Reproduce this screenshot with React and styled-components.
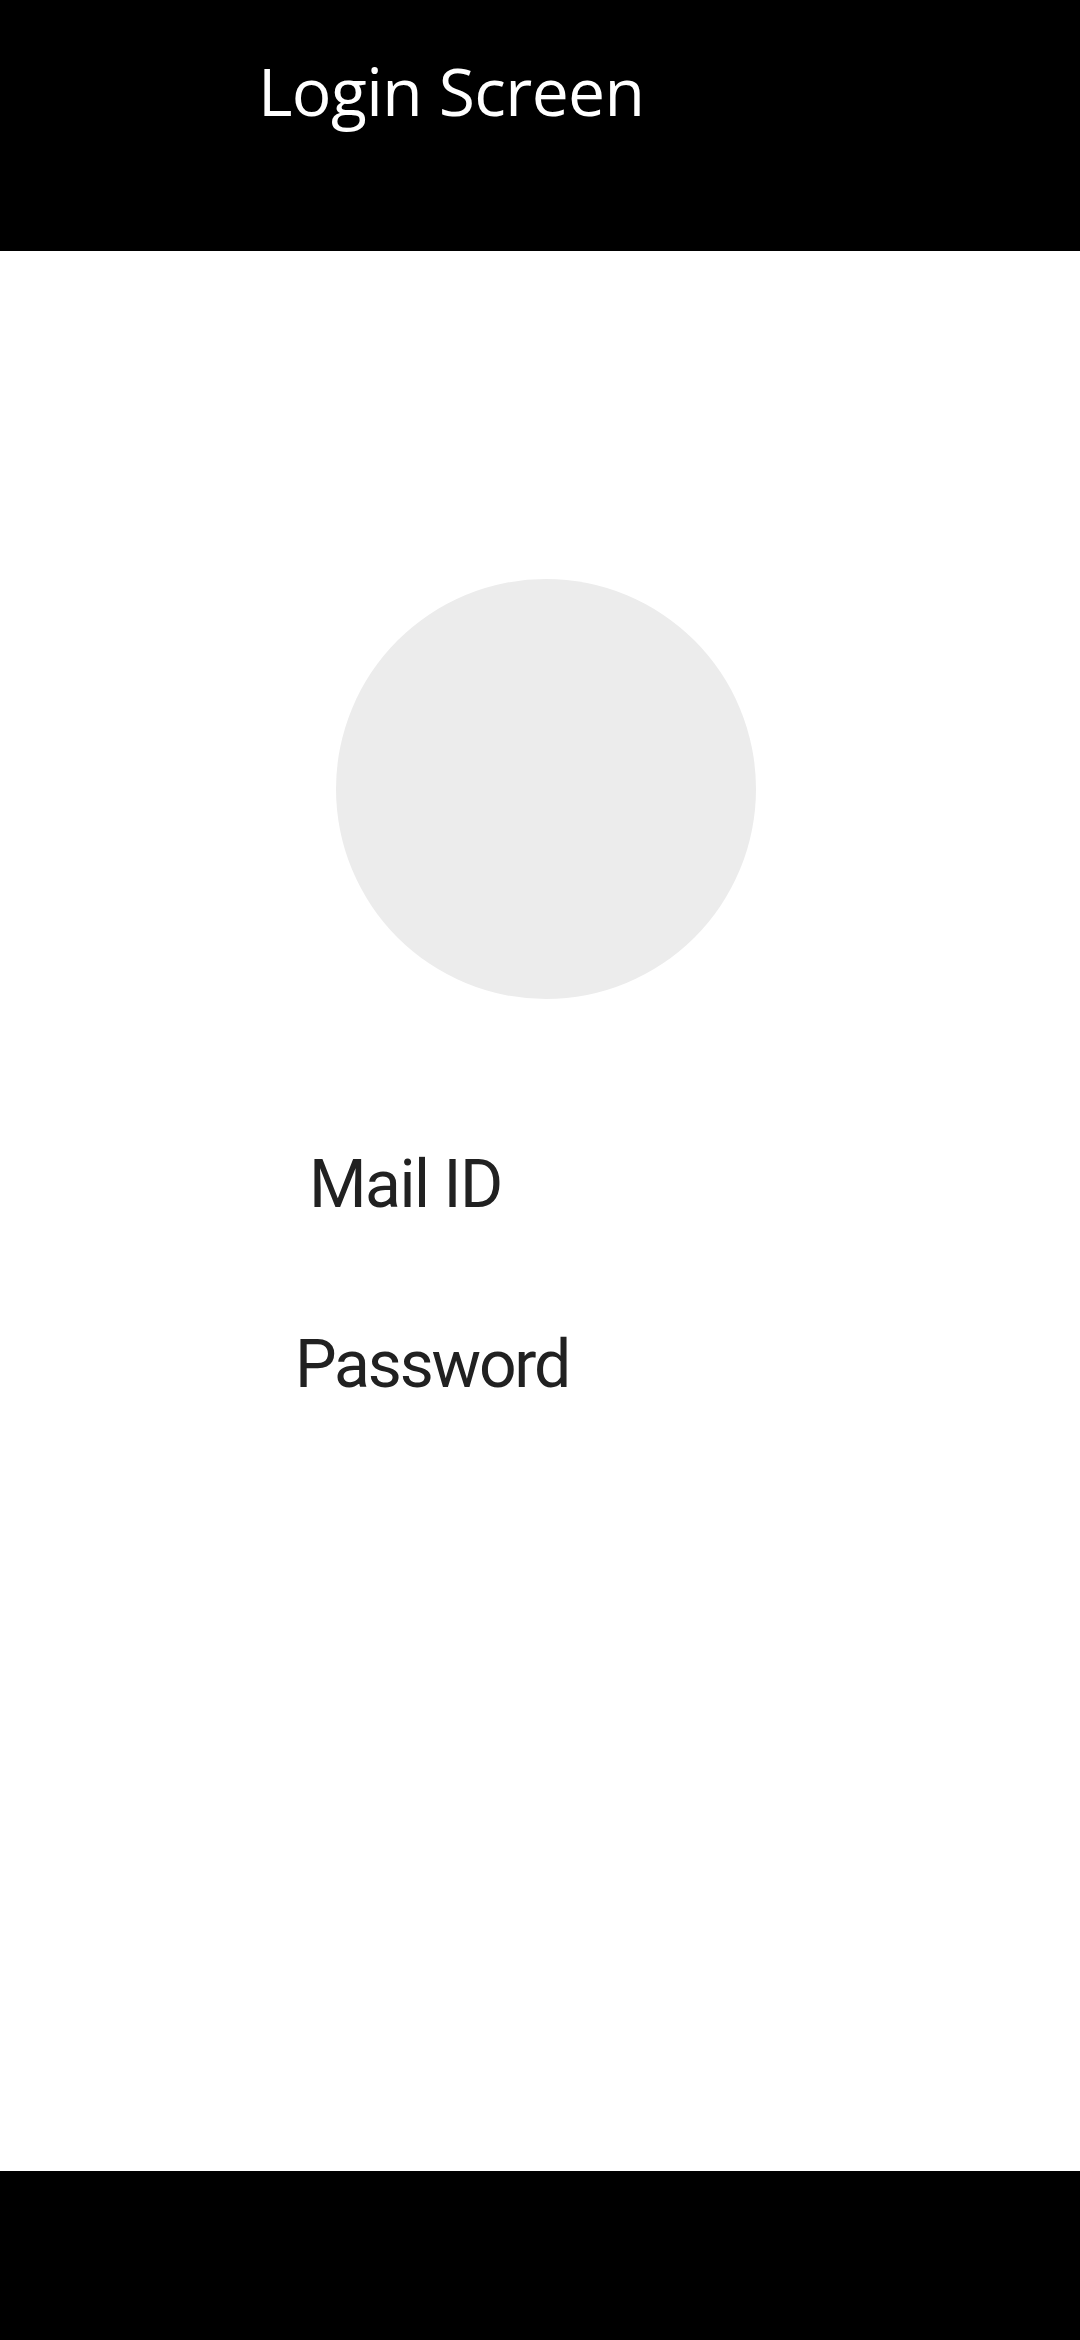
import React from "react";
import styled, { createGlobalStyle } from "styled-components";

const Global = createGlobalStyle`
  html, body { margin: 0; padding: 0; background: #ffffff; }
  #root { min-height: 100vh; }
  * { box-sizing: border-box; }
`;

const Screen = styled.div`
  display: flex;
  flex-direction: column;
  min-height: 2340px;
  background: #ffffff;
`;

const Header = styled.header`
  height: 251px;
  background: #000000;
  padding: 57px 0 0 258px;
`;

const Title = styled.h1`
  margin: 0;
  font-family: "Open Sans", "Noto Sans", sans-serif;
  font-weight: 400;
  font-size: 66px;
  line-height: 1;
  color: #ffffff;
  letter-spacing: -0.6px;
`;

const Main = styled.main`
  flex: 1;
  display: flex;
  flex-direction: column;
  align-items: flex-start;
  padding-top: 328px;
`;

const Avatar = styled.div`
  width: 420px;
  height: 420px;
  border-radius: 50%;
  background: #ececec;
  margin-left: 336px;
  margin-bottom: 153px;
`;

const Label = styled.div`
  font-family: Roboto, "Noto Sans", sans-serif;
  font-size: 66px;
  line-height: 1;
  color: #212121;
  margin-left: ${(p) => p.$indent}px;
  margin-bottom: ${(p) => p.$after || 0}px;
  letter-spacing: ${(p) => p.$track}px;
`;

const Footer = styled.footer`
  height: 169px;
  background: #000000;
`;

export default function App() {
  return (
    <>
      <Global />
      <Screen>
        <Header>
          <Title>Login Screen</Title>
        </Header>
        <Main>
          <Avatar />
          <Label $indent={309} $after={114} $track={-1.5}>Mail ID</Label>
          <Label $indent={295} $track={-2.2}>Password</Label>
        </Main>
        <Footer />
      </Screen>
    </>
  );
}
